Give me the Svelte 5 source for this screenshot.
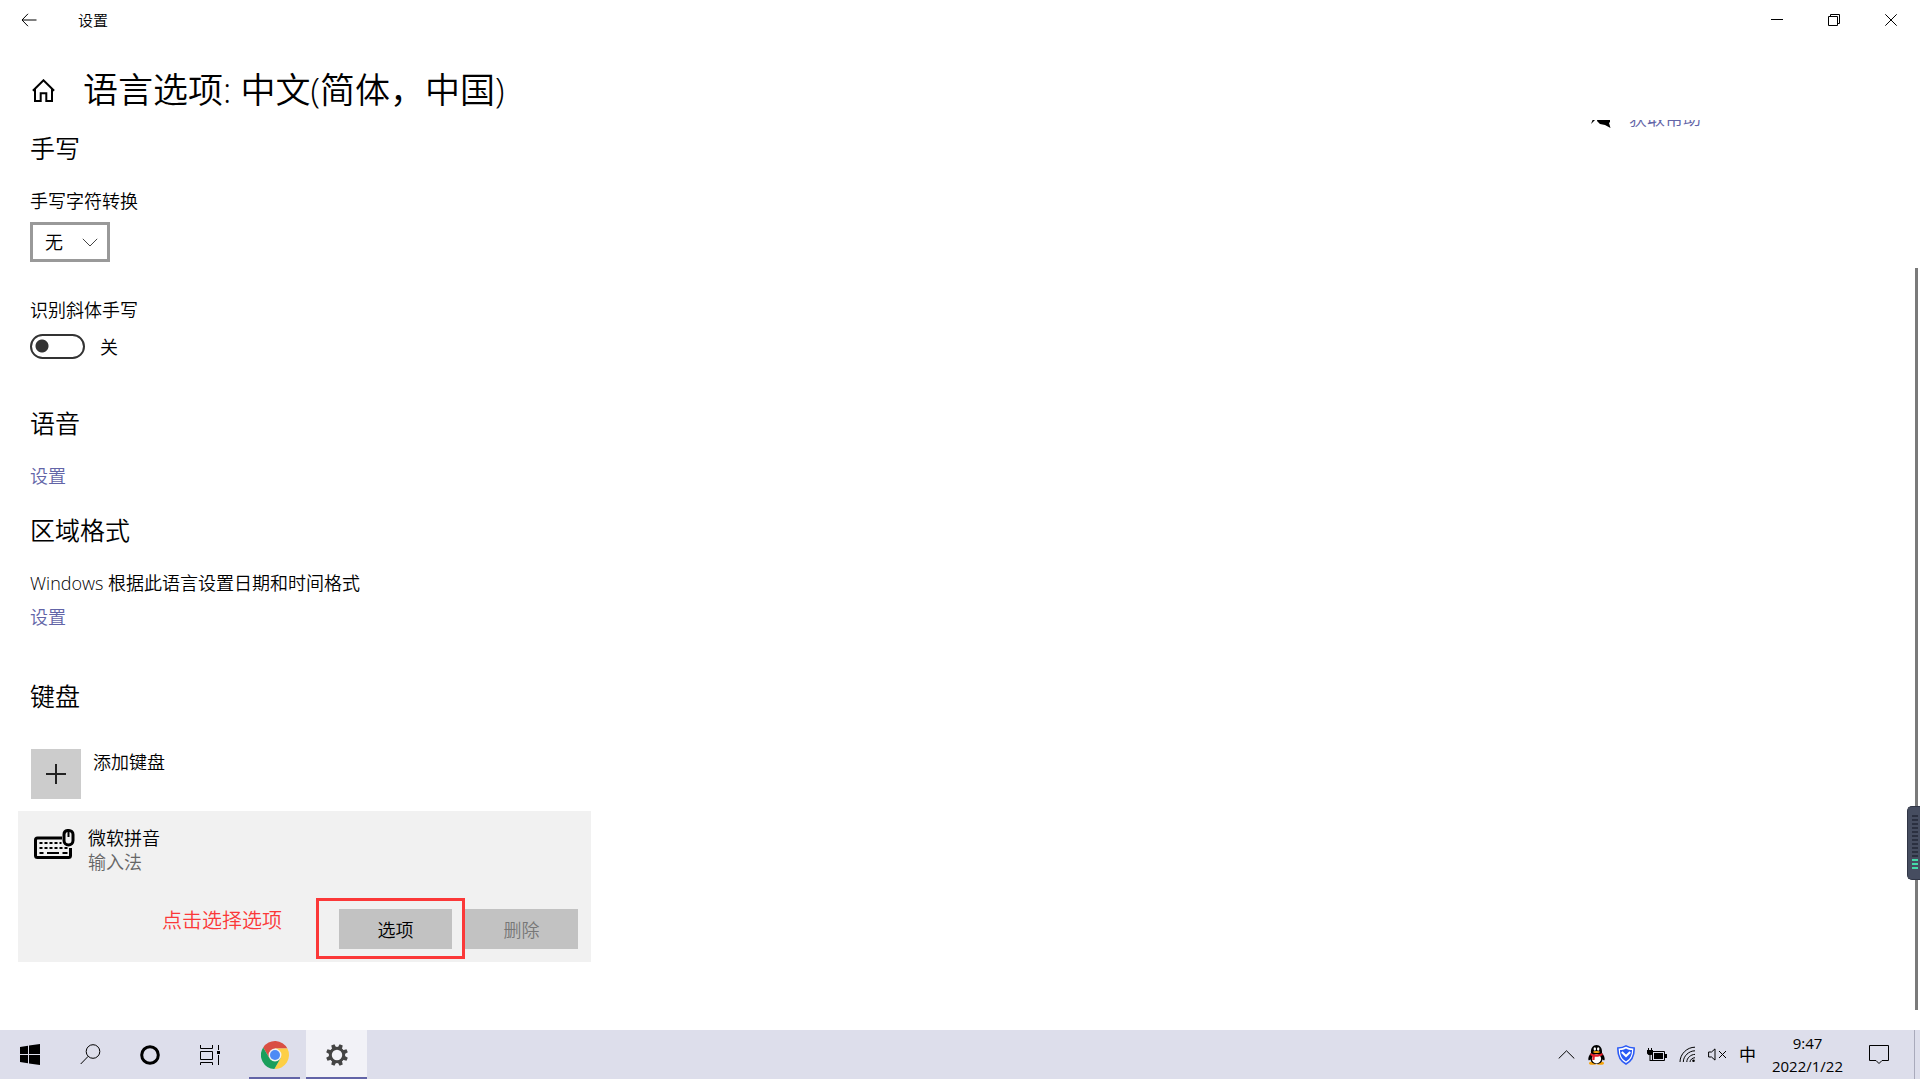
<script>
  let conversion = $state('无');
  let cursive = $state(false);

  const teeth = [0, 45, 90, 135, 180, 225, 270, 315];
  const bars = [0, 1, 2, 3, 4, 5, 6, 7, 8, 9, 10, 11, 12, 13];
</script>

<div class="window">
  <header>
    <div class="titlebar">
      <button class="back" aria-label="返回">
        <svg width="16" height="14" viewBox="0 0 16 14"><path d="M15.500 7H1M7 .8 1 7l6 6.200" /></svg>
      </button>
      <span class="app-name">设置</span>
      <div class="controls">
        <button aria-label="最小化">
          <svg width="12" height="12" viewBox="0 0 12 12"><path d="M0 5.500h12" /></svg>
        </button>
        <button aria-label="还原">
          <svg width="12" height="12" viewBox="0 0 12 12"><path d="M.5 2.500h9v9h-9zM2.500 2.500v-2h9v9h-2" /></svg>
        </button>
        <button aria-label="关闭">
          <svg width="12" height="12" viewBox="0 0 12 12"><path d="M.3.3l11.400 11.400M11.700.3.3 11.700" /></svg>
        </button>
      </div>
    </div>
    <div class="heading">
      <button aria-label="主页">
        <svg width="23" height="23" viewBox="0 0 23 23">
          <path class="home" d="M.9 11.800 11.500 1.300l10.600 10.500M3 10v11.900h5.700v-7.600h5.600v7.600H20V10" />
        </svg>
      </button>
      <h1>语言选项: 中文(简体，中国)</h1>
    </div>
  </header>

  <main>
    <div class="content">
      <section>
        <h2>手写</h2>
        <label for="conversion">手写字符转换</label>
        <div class="select">
          <select id="conversion" bind:value={conversion}>
            <option>无</option>
          </select>
          <svg width="16" height="9" viewBox="0 0 16 9"><path d="M.8.8 8 8 15.200.8" /></svg>
        </div>
        <label for="cursive" class="spaced">识别斜体手写</label>
        <div class="toggle">
          <input id="cursive" type="checkbox" role="switch" bind:checked={cursive} />
          <span>{cursive ? '开' : '关'}</span>
        </div>
      </section>

      <section>
        <h2>语音</h2>
        <a href="#speech">设置</a>
      </section>

      <section class="region">
        <h2>区域格式</h2>
        <p>Windows 根据此语言设置日期和时间格式</p>
        <a href="#region">设置</a>
      </section>

      <section class="keyboards">
        <h2>键盘</h2>
        <button class="add">
          <span class="plus">
            <svg width="20" height="20" viewBox="0 0 20 20"><path d="M0 10h20M10 0v20" /></svg>
          </span>
          <span>添加键盘</span>
        </button>
        <div class="card">
          <div class="ime">
            <svg width="41" height="31" viewBox="0 0 41 31">
              <path class="outline" d="M28 9H3.500a2 2 0 0 0-2 2v15.500a2 2 0 0 0 2 2h31a2 2 0 0 0 2-2V19" />
              <path class="keys" d="M5.500 14h22M5.500 19h28" />
              <path class="bar" d="M5.500 24h4M13 24h12M28.500 24h5" />
              <path class="outline" d="M33.500 1.500h1.500a4 4 0 0 1 4 4v6a4.500 4.500 0 0 1-9 0v-6a4 4 0 0 1 3.500-4z" />
              <path class="bar" d="M34.500 2v6" />
            </svg>
            <div>
              <div>微软拼音</div>
              <div class="kind">输入法</div>
            </div>
          </div>
          <div class="actions">
            <span class="note">点击选择选项</span>
            <div class="marked"><button>选项</button></div>
            <button disabled>删除</button>
          </div>
        </div>
      </section>
    </div>

    <aside>
      <svg width="21" height="23" viewBox="0 0 21 23">
        <path d="M1 2h13v9H8l-7 7 2-5zM8 9h12v7l-1 1 1.500 5-5.500-3-5-1-3-3z" />
      </svg>
      <a href="#help">获取帮助</a>
    </aside>

    <div class="scrollbar"></div>
  </main>

  <footer>
    <button class="task" aria-label="开始">
      <svg width="20" height="21" viewBox="0 0 20 21">
        <path d="M0 3l8-1.200V10H0zM9 1.600 20 0v10H9zM0 11h8v8.200L0 18zM9 11h11v10L9 19.400z" />
      </svg>
    </button>
    <button class="task" aria-label="搜索">
      <svg class="line" width="21" height="21" viewBox="0 0 21 21">
        <circle cx="13" cy="7.500" r="6.800" /><path d="M8.200 12.300.7 20" />
      </svg>
    </button>
    <button class="task" aria-label="Cortana">
      <svg class="line" width="20" height="20" viewBox="0 0 20 20"><circle class="ring" cx="10" cy="10" r="8.300" /></svg>
    </button>
    <button class="task" aria-label="任务视图">
      <svg class="line" width="21" height="20" viewBox="0 0 21 20">
        <path d="M.5 0v3.500h12V0M.5 6.500h12v8H.5zM.5 20v-2.500h12V20M18.500 0v5M18.500 10v10" />
        <path d="M18.500 6v3" stroke-width="3" />
      </svg>
    </button>
    <button class="task chrome" aria-label="Chrome">
      <svg width="28" height="28" viewBox="0 0 48 48">
        <path fill="#d94f43" d="M3.800 11A24 24 0 0 1 45.300 13H24l-9.500 16.500z" />
        <path fill="#fdcf45" d="M45.300 13A24 24 0 0 1 22.900 48l10.600-18.500L24 13z" />
        <path fill="#1a9f5c" d="M22.900 48A24 24 0 0 1 3.800 11l10.700 18.500h19z" />
        <circle cx="24" cy="24" r="11" fill="#f1f1f1" />
        <circle cx="24" cy="24" r="8.600" fill="#4c8bf5" />
      </svg>
    </button>
    <button class="task active" aria-label="设置">
      <svg width="22" height="22" viewBox="-11 -11 22 22">
        <circle r="6.700" fill="none" stroke="#444" stroke-width="3" />
        {#each teeth as angle}
          <path fill="#444" d="M-2.200-7.200-1.700-11h3.400l.5 3.800z" transform="rotate({angle + 22.5})" />
        {/each}
      </svg>
    </button>

    <div class="tray">
      <svg class="line caret" width="17" height="9" viewBox="0 0 17 9"><path d="M.7 8.500 8.500.8l7.800 7.700" /></svg>
      <svg width="17" height="20" viewBox="0 0 17 20">
        <ellipse cx="4.800" cy="18.200" rx="3.800" ry="1.600" fill="#f5a40c" />
        <ellipse cx="12.200" cy="18.200" rx="3.800" ry="1.600" fill="#f5a40c" />
        <path d="M3 8C2.500 3 5 0 8.500 0S14.500 3 14 8c2 2 3 5 2.600 7-.5.800-1.500 0-2-.8C14 17.500 11.500 19 8.500 19s-5.500-1.500-6.100-4.800c-.5.800-1.500 1.600-2 .8C0 13 1 10 3 8z" />
        <ellipse cx="8.500" cy="13.800" rx="4.600" ry="4.600" fill="#fff" />
        <path d="M2.800 8c3.500 2 8 2 11.400 0l.6 2c-2.500 1.600-5.500 2-8 1.700L6.500 15H4.300l.2-3.800-2.300-1.100z" fill="#e8202a" />
        <ellipse cx="6.800" cy="4" rx="1.200" ry="1.700" fill="#fff" />
        <ellipse cx="10.200" cy="4" rx="1.200" ry="1.700" fill="#fff" />
        <ellipse cx="8.500" cy="7" rx="3.300" ry="1" fill="#f5a40c" />
      </svg>
      <svg width="18" height="20" viewBox="0 0 18 20">
        <path d="M9 .9c2.500 1.500 5 2 8.100 2.100.3 7-1.600 12.500-8.100 16C2.500 15.500.6 10 .9 3 4 2.900 6.500 2.400 9 .9z" fill="#fff" stroke="#2b5af5" stroke-width="1.600" />
        <path d="M9 3.500c2 1 3.800 1.500 6 1.600 0 5-1.500 8.700-6 11.400C4.500 13.800 3 10.100 3 5.100c2.200-.1 4-.6 6-1.600z" fill="#2b5af5" />
        <path d="M4.800 7 9 11l4.200-4" fill="none" stroke="#fff" stroke-width="2" />
      </svg>
      <svg width="20" height="14" viewBox="0 0 20 14">
        <path d="M5.500 3.500h12v9h-12z" class="battery" /><path d="M7 5h9v6H7zM18 6h2v4h-2zM0 2h6v3.500L4.500 7h-3L0 5.500zM1 0h1v2H1zM4 0h1v2H4zM2.500 7h1v5h3v1h-4z" />
      </svg>
      <svg class="line" width="17" height="17" viewBox="0 0 17 17">
        <path d="M1 16C1 8 8 1.200 16 1.200M4.300 16C4.300 10 10 4.800 16 4.800M7.800 16c0-4 4-7.600 8.200-7.600M11 16c0-2.200 2.500-4.300 5-4.300" />
        <circle cx="14.500" cy="14.800" r="1.300" fill="#000" stroke="none" />
      </svg>
      <svg class="line" width="19" height="13" viewBox="0 0 19 13">
        <path d="M.6 4h2.900L7 .9v11.200L3.500 9H.6zM11 3l7 7M18 3l-7 7" />
      </svg>
      <span class="lang">中</span>
      <div class="clock">
        <time>9:47</time>
        <time>2022/1/22</time>
      </div>
      <button class="notice" aria-label="通知">
        <svg class="line" width="21" height="20" viewBox="0 0 21 20"><path d="M.5.5h19v15h-6.500l-3 3-3-3H.5z" /></svg>
      </button>
    </div>
  </footer>

  <!-- level meter docked to the screen edge -->
  <div class="meter">
    {#each bars as bar}
      <i class:lit={bar > 10}></i>
    {/each}
  </div>
</div>

<style>
:global(body) {
  margin: 0;
}

.window {
  background: #fff;
  color: #000;
  display: flex;
  flex-direction: column;
  font: 18px/24px "Open Sans", "Noto Sans CJK SC", sans-serif;
  font-weight: 350;
  height: 100vh;
  overflow: hidden;
  position: relative;
}

button {
  background: none;
  border: 0;
  color: inherit;
  font: inherit;
  padding: 0;
}

svg {
  display: block;
  flex: none;
}

h1,
h2,
p {
  font-weight: inherit;
  margin: 0;
}

a {
  color: #6264a7;
  text-decoration: none;
}

header {
  flex: none;
  height: 120px;
}

header path {
  fill: none;
  stroke: #000;
}

.titlebar {
  align-items: center;
  display: flex;
  height: 40px;
}

.back {
  padding: 0 41px 0 21px;
}

.app-name {
  font-size: 15px;
}

.controls {
  display: flex;
  margin: 0 1px 0 auto;
}

.controls button {
  display: flex;
  justify-content: center;
  width: 57px;
}

.heading {
  align-items: center;
  display: flex;
  gap: 28px;
  padding: 26px 0 0 32px;
}

.home {
  stroke-width: 2;
}

h1 {
  font-size: 35px;
  line-height: 48px;
}

main {
  display: flex;
  flex: 1;
  justify-content: space-between;
  min-height: 0;
  overflow: hidden;
  position: relative;
}

.content {
  display: flex;
  flex-direction: column;
  gap: 26px;
  padding: 12px 0 0 30px;
}

section {
  align-items: flex-start;
  display: flex;
  flex-direction: column;
}

h2 {
  font-size: 25px;
  line-height: 32px;
  margin-bottom: 25px;
}

.select {
  margin-top: 9px;
  position: relative;
}

select {
  appearance: none;
  background: #fff;
  border: 3px solid #999;
  border-radius: 0;
  color: #000;
  font: inherit;
  height: 40px;
  padding: 0 12px;
  width: 80px;
}

.select svg {
  fill: none;
  pointer-events: none;
  position: absolute;
  right: 12px;
  stroke: #444;
  top: 16px;
}

.spaced {
  margin-top: 36px;
}

.toggle {
  align-items: center;
  display: flex;
  gap: 15px;
  margin: 12px 0 22px;
}

.toggle input {
  appearance: none;
  background: radial-gradient(circle at 10px 10px, #333 6px, transparent 7px);
  border: 2px solid #333;
  border-radius: 13px;
  height: 25px;
  margin: 0;
  width: 55px;
}

.toggle input:checked {
  background: radial-gradient(circle at 41px 10px, #333 6px, transparent 7px);
}

.region p {
  margin-bottom: 10px;
}

.keyboards {
  margin-top: 25px;
}

.keyboards h2 {
  margin-bottom: 37px;
}

.add {
  align-items: flex-start;
  display: flex;
  gap: 12px;
  line-height: 26px;
  margin-left: 1px;
}

.plus {
  align-items: center;
  background: #ccc;
  display: flex;
  height: 50px;
  justify-content: center;
  width: 50px;
}

.plus path {
  stroke: #222;
  stroke-width: 2;
}

.card {
  background: #f1f1f1;
  display: flex;
  flex-direction: column;
  gap: 24px;
  margin: 12px 0 0 -12px;
  padding: 15px 13px 3px 16px;
  width: 544px;
}

.ime {
  display: flex;
  gap: 13px;
}

.ime svg {
  margin-top: 3px;
}

.outline,
.keys,
.bar {
  fill: none;
  stroke: #000;
  stroke-width: 2;
}

.outline {
  fill: #f1f1f1;
  stroke-width: 3;
}

.keys {
  stroke-dasharray: 3 2;
}

.kind {
  color: #666;
}

.actions {
  align-items: center;
  display: flex;
  justify-content: flex-end;
}

.actions button {
  background: #c2c2c2;
  height: 40px;
  padding-top: 2px;
  width: 113px;
}

.actions button:disabled {
  color: #777;
}

.note {
  color: #fb3838;
  font-size: 20px;
  margin: 0 34px 16px 0;
}

.marked {
  border: 3px solid #fb3838;
  padding: 8px 10px 7px 20px;
}

aside {
  align-items: flex-start;
  display: flex;
  gap: 18px;
  margin-top: -14px;
  width: 330px;
}

.scrollbar {
  background: #7a7a7a;
  bottom: 20px;
  position: absolute;
  right: 2px;
  top: 148px;
  width: 3px;
}

footer {
  background: #dddeeb;
  display: flex;
  flex: none;
  height: 49px;
}

.task {
  align-items: center;
  display: flex;
  justify-content: center;
  width: 60px;
}

.line {
  fill: none;
  stroke: #000;
}

.ring {
  stroke-width: 3;
}

.chrome,
.active {
  border-bottom: 2px solid #6264a7;
  border-top: 2px solid transparent;
}

.chrome {
  margin: 0 6px 0 9px;
  width: 51px;
}

.active {
  background: #f2f2f7;
  width: 61px;
}

.tray {
  align-items: center;
  display: flex;
  font-weight: 400;
  gap: 12px;
  margin-left: auto;
}

.caret {
  margin-right: 1px;
}

.battery {
  fill: none;
  stroke: #000;
}

.lang {
  font-size: 17px;
}

.clock {
  display: flex;
  flex-direction: column;
  font-size: 15px;
  line-height: 23px;
  margin-left: 4px;
  text-align: center;
}

.notice {
  border-right: 1px solid #a9aabb;
  height: 49px;
  margin: 0 5px 0 14px;
  padding-right: 24px;
}

.meter {
  background: #464d60;
  border: 1px solid #303545;
  border-radius: 5px 0 0 5px;
  border-right: 0;
  box-sizing: border-box;
  display: flex;
  flex-direction: column;
  gap: 2px;
  height: 74px;
  padding: 8px 2px 0 4px;
  position: absolute;
  right: 0;
  top: 806px;
  width: 13px;
}

.meter i {
  background: #2b3040;
  height: 2px;
}

.meter .lit {
  background: #45d9a8;
}
</style>
